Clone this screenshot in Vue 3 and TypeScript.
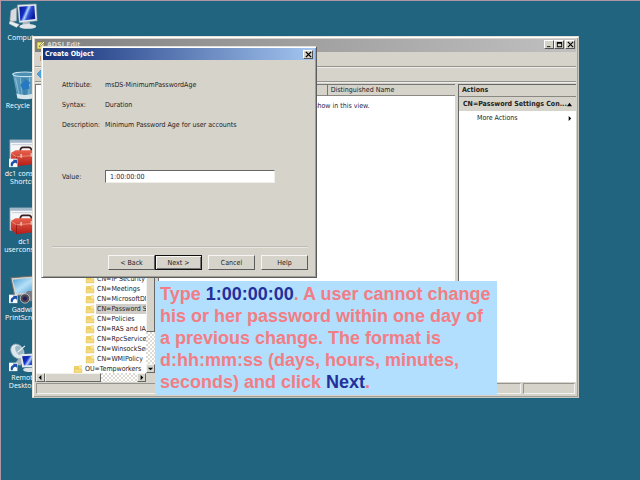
<script setup lang="ts">
import { ref } from 'vue'

interface TreeNode {
  label: string
  level: number
  selected?: boolean
}

interface Shortcut {
  icon: 'computer' | 'bin' | 'toolbox' | 'camera' | 'remote'
  lines: string[]
  link: boolean
}

const shortcuts: Shortcut[] = [
  { icon: 'computer', lines: ['Computer'], link: false },
  { icon: 'bin', lines: ['Recycle Bin'], link: false },
  { icon: 'toolbox', lines: ['dc1 console', 'Shortcut'], link: true },
  { icon: 'toolbox', lines: ['dc1', 'userconsole'], link: false },
  { icon: 'camera', lines: ['Gadwin', 'PrintScreen'], link: true },
  { icon: 'remote', lines: ['Remote', 'Desktops'], link: true },
]

const nodes: TreeNode[] = [
  { label: 'CN=IP Security', level: 2 },
  { label: 'CN=Meetings', level: 2 },
  { label: 'CN=MicrosoftDNS', level: 2 },
  { label: 'CN=Password Settings', level: 2, selected: true },
  { label: 'CN=Policies', level: 2 },
  { label: 'CN=RAS and IAS', level: 2 },
  { label: 'CN=RpcServices', level: 2 },
  { label: 'CN=WinsockServices', level: 2 },
  { label: 'CN=WMIPolicy', level: 2 },
  { label: 'OU=Tempworkers', level: 1 },
]

const duration = ref('1:00:00:00')
</script>

<template>
  <main class="desktop">
    <svg class="defs" width="0" height="0" aria-hidden="true">
      <defs>
        <linearGradient id="screen" x1="0" y1="0" x2="1" y2="0.4">
          <stop offset="0" stop-color="#0a1a8c" />
          <stop offset="0.4" stop-color="#1230c8" />
          <stop offset="0.55" stop-color="#b4d0fa" />
          <stop offset="0.7" stop-color="#2c50d8" />
          <stop offset="1" stop-color="#0c1c9c" />
        </linearGradient>
        <linearGradient id="glass" x1="0" y1="0" x2="1" y2="1">
          <stop offset="0" stop-color="#4ea2d8" />
          <stop offset="0.5" stop-color="#b6e0f6" />
          <stop offset="1" stop-color="#4a9ad2" />
        </linearGradient>
        <linearGradient id="bin" x1="0" y1="0" x2="1" y2="0">
          <stop offset="0" stop-color="#7fb6d4" />
          <stop offset="0.5" stop-color="#3c88b4" />
          <stop offset="1" stop-color="#a8cfe2" />
        </linearGradient>
        <linearGradient id="red" x1="0" y1="0" x2="0" y2="1">
          <stop offset="0" stop-color="#e8604c" />
          <stop offset="1" stop-color="#b41c18" />
        </linearGradient>
      </defs>
    </svg>

    <nav class="shortcuts" aria-label="Desktop">
      <a v-for="item in shortcuts" :key="item.lines.join(' ')" href="#" class="shortcut">
        <svg class="shortcut-icon" viewBox="0 0 32 32" aria-hidden="true">
          <g v-if="item.icon === 'computer'">
            <path d="M2 8 8 5v14l-5 1-2-2z" fill="#d8dce0" stroke="#9aa4ac" stroke-width="0.6" />
            <path d="M15 20h7l1 4h-9z" fill="#aeb8c0" />
            <ellipse cx="20" cy="25" rx="9" ry="2.6" fill="#dfe4e8" />
            <path d="M9 2 29 1l1 18-19 2z" fill="#e6eaee" stroke="#9aa8b4" stroke-width="0.6" />
            <path d="M11 4l16-1 1 14-16 2z" fill="url(#screen)" />
            <path d="M1 19l10 4-3 3-8-4z" fill="#eceff1" stroke="#98a4ac" stroke-width="0.5" />
          </g>
          <g v-else-if="item.icon === 'bin'">
            <path d="M4 3h26l-4 26H9z" fill="url(#bin)" opacity="0.85" />
            <ellipse cx="17" cy="3.500" rx="13" ry="2.5" fill="#4b8eb2" stroke="#c8e2ee" stroke-width="1.2" />
            <path d="M7 8l4 18M12 7l2 20M22 7l-1 20" stroke="#b8dcec" stroke-width="1" fill="none" opacity="0.5" />
            <path d="M15 12l4-3 4 4-2 1 1 5-7 1-3-5z" fill="#2678c0" />
            <path d="M8 24q8 3 19 0l-1 5q-8 2-17 0z" fill="#d8e6ec" />
          </g>
          <g v-else-if="item.icon === 'toolbox'">
            <path d="M1 1h30v24H1z" fill="#f4f6f8" stroke="#8ea0b0" stroke-width="0.8" />
            <path d="M1 1h30v3H1z" fill="#a4b8cc" />
            <path d="M3 6h26" stroke="#c6ced6" />
            <path d="M12 13q0-4 3-4h6q3 0 3 4" fill="none" stroke="#3a2020" stroke-width="1.8" />
            <path d="M2 15l5-3h25v14l-24 3-6-5z" fill="url(#red)" />
            <path d="M2 15l6 4 24-2" fill="none" stroke="#f09880" stroke-width="0.9" />
            <path d="M8 19v10" stroke="#8c1410" stroke-width="0.8" />
            <path d="M12 16h2v4h-2zM23 15h2v4h-2z" fill="#e8b4a4" />
          </g>
          <g v-else-if="item.icon === 'camera'">
            <path d="M2 3 27 1l3 19-24 2z" fill="#d8d4cc" stroke="#6e6a62" stroke-width="1" />
            <path d="M4 5l21-2 3 15-20 2z" fill="url(#glass)" />
            <path d="M16 21l4-4h12v11H15z" fill="#7c7c84" />
            <circle cx="17" cy="25" r="5" fill="#4c4854" stroke="#c0bcc4" stroke-width="1" />
            <circle cx="17" cy="25" r="2.2" fill="#281c5c" />
          </g>
          <g v-else>
            <path d="M11 15l5 4-4 5-6-1z" fill="#a8b4bc" />
            <ellipse cx="9" cy="9" rx="6.500" ry="8.500" transform="rotate(-35 9 9)" fill="#dce8ee" stroke="#8aa0ac" stroke-width="0.8" />
            <ellipse cx="11" cy="8" rx="3.500" ry="6" transform="rotate(-35 11 8)" fill="#9cb8c6" />
            <path d="M9 10l8-7" stroke="#eef4f6" stroke-width="1.2" />
            <path d="M12 12l20-1v14l-18 1z" fill="#e2e8ee" />
            <path d="M14 14l18-1v10l-16 1z" fill="url(#screen)" />
            <ellipse cx="23" cy="28.500" rx="8" ry="2.500" fill="#dce2e6" />
          </g>
          <g v-if="item.link">
            <path d="M0 21h9v9H0z" fill="#f6f8fc" />
            <path d="M2 29q-1-5 3-5.500L4 22h4.500v4.500L7 25.200Q4 25.500 4 29z" fill="#1c50a8" />
          </g>
        </svg>
        <span v-for="line in item.lines" :key="line">{{ line }}</span>
      </a>
    </nav>

    <section class="window console">
      <header class="titlebar inactive">
        <svg class="app-icon" viewBox="0 0 10 10" aria-hidden="true">
          <path d="M1 2h7v7H1z" fill="#f4e878" stroke="#8c7c20" stroke-width="0.7" />
          <path d="M3 7l1-2 4-4 1 1-4 4z" fill="#fff" stroke="#5c5420" stroke-width="0.6" />
        </svg>
        <h1>ADSI Edit</h1>
        <div class="captions">
          <button type="button" aria-label="Minimize">
            <svg viewBox="0 0 8 8"><path d="M1 6h4v1H1z" /></svg>
          </button>
          <button type="button" aria-label="Maximize">
            <svg viewBox="0 0 8 8"><path d="M1 1h6v6H1zM2 3v3h4V3z" fill-rule="evenodd" /></svg>
          </button>
          <button type="button" class="apart" aria-label="Close">
            <svg viewBox="0 0 8 8"><path d="M1 1l6 6M7 1L1 7" stroke="#000" stroke-width="1.3" /></svg>
          </button>
        </div>
      </header>
      <div class="menu"><button type="button">File</button><button type="button">Action</button></div>
      <div class="toolbar">
        <button type="button" aria-label="Back">
          <svg viewBox="0 0 12 10"><path d="M0 5l5-5v3h7v4H5v3z" fill="#48a4e0" stroke="#2470b0" stroke-width="0.5" /></svg>
        </button>
      </div>

      <div class="panes">
        <div class="tree-pane">
          <ul class="tree">
            <li v-for="node in nodes" :key="node.label" :class="['node', `level-${node.level}`]">
              <svg viewBox="0 0 10 9" aria-hidden="true">
                <path d="M1 1h7l1 1v6H1z" fill="#f0d068" />
                <path d="M6 0h3v4H6z" fill="#f8e8a0" />
                <path d="M1 4h8v4H1z" fill="#f6dc80" stroke="#dcb850" stroke-width="0.4" />
              </svg>
              <span :class="{ selected: node.selected }">{{ node.label }}</span>
            </li>
          </ul>
          <div class="vscroll">
            <div class="thumb"></div>
            <div class="track"></div>
            <button type="button" aria-label="Scroll down">
              <svg viewBox="0 0 8 8"><path d="M1 3h6L4 6z" /></svg>
            </button>
          </div>
          <div class="hscroll">
            <button type="button" aria-label="Scroll left">
              <svg viewBox="0 0 8 8"><path d="M5 1v6L2 4z" /></svg>
            </button>
            <div class="thumb"></div>
            <div class="track"></div>
            <button type="button" aria-label="Scroll right">
              <svg viewBox="0 0 8 8"><path d="M3 1v6l3-3z" /></svg>
            </button>
          </div>
        </div>

        <div class="list-pane">
          <table>
            <thead>
              <tr><th class="name-col">Name</th><th>Distinguished Name</th></tr>
            </thead>
            <tbody>
              <tr><td colspan="2">There are no items to show in this view.</td></tr>
            </tbody>
          </table>
        </div>

        <aside class="actions">
          <h2>Actions</h2>
          <button type="button" class="group">
            <span>CN=Password Settings Con...</span>
            <svg viewBox="0 0 6 6"><path d="M0 5h6L3 1z" /></svg>
          </button>
          <button type="button" class="more">
            <span>More Actions</span>
            <svg viewBox="0 0 6 6"><path d="M2 0v6l3-3z" /></svg>
          </button>
        </aside>
      </div>

      <footer class="status"><span class="wide"></span><span></span></footer>
    </section>

    <form class="window dialog" @submit.prevent>
      <header class="titlebar">
        <h1>Create Object</h1>
        <div class="captions">
          <button type="button" aria-label="Close">
            <svg viewBox="0 0 8 8"><path d="M1 1l6 6M7 1L1 7" stroke="#000" stroke-width="1.6" /></svg>
          </button>
        </div>
      </header>
      <div class="fields">
        <span>Attribute:</span><span>msDS-MinimumPasswordAge</span>
        <span>Syntax:</span><span>Duration</span>
        <span>Description:</span><span>Minimum Password Age for user accounts</span>
      </div>
      <div class="value-row">
        <label for="value">Value:</label>
        <input id="value" v-model="duration" type="text" />
      </div>
      <div class="buttons">
        <div class="pair">
          <button type="button">&lt; Back</button>
          <button type="submit" class="default">Next &gt;</button>
        </div>
        <button type="button">Cancel</button>
        <button type="button">Help</button>
      </div>
    </form>

    <p class="callout">
      Type <strong>1:00:00:00</strong>. A user cannot change<br />
      his or her password within one day of<br />
      a previous change. The format is<br />
      d:hh:mm:ss (days, hours, minutes,<br />
      seconds) and click <strong>Next</strong>.
    </p>
  </main>
</template>

<style>
body {
  margin: 0;
}
</style>

<style scoped>
* {
  box-sizing: border-box;
}

.desktop {
  position: relative;
  min-height: 100vh;
  overflow: hidden;
  background: #216480;
  border-top: 1px solid #b096a4;
  border-left: 1px solid #b096a4;
  font: 7px/10px "DejaVu Sans Condensed", "DejaVu Sans", sans-serif;
  color: #222;
}

.defs {
  position: absolute;
}

h1,
h2,
p,
ul {
  margin: 0;
  padding: 0;
}

button,
input {
  font: inherit;
  color: inherit;
  margin: 0;
  padding: 0;
  border: 0;
  border-radius: 0;
  background: none;
}

/* Desktop icons */
.shortcuts {
  display: grid;
  grid-auto-rows: 68px;
  width: 46px;
  padding-top: 2px;
}

.shortcut {
  display: flex;
  flex-direction: column;
  align-items: center;
  font: 7px/8px "Open Sans", sans-serif;
  color: #fff;
  text-decoration: none;
  white-space: nowrap;
}

.shortcut-icon {
  flex: none;
  width: 30px;
  height: 30px;
  margin-bottom: 1px;
}

/* Window frame */
.window {
  position: absolute;
  display: flex;
  flex-direction: column;
  background: #d6d3cb;
  border: 1px solid;
  border-color: #e4e2dc #5c5c5c #5c5c5c #e4e2dc;
  box-shadow: inset 1px 1px #fff, inset -1px -1px #a09e98;
}

.titlebar {
  display: flex;
  align-items: center;
  flex: none;
  height: 12px;
  padding: 0 2px;
  background: linear-gradient(90deg, #14307a, #a4c6f0);
  color: #fff;
}

.titlebar.inactive {
  align-items: flex-start;
  height: 13px;
  padding: 1px 1px 0;
  background: linear-gradient(90deg, #808080, #c0c0c0);
  color: #d6d3cb;
}

.titlebar h1 {
  flex: 1;
  font-size: 7px;
  line-height: 10px;
  font-weight: bold;
}

.app-icon {
  width: 10px;
  height: 10px;
  margin-right: 1px;
}

.captions {
  display: flex;
}

.captions button {
  display: grid;
  place-items: center;
  width: 10px;
  height: 9px;
  background: #d6d3cb;
  border: 1px solid;
  border-color: #fff #555 #555 #fff;
}

.captions .apart {
  margin-left: 1px;
}

.captions svg {
  width: 7px;
  height: 7px;
}

/* Console window */
.console {
  top: 35px;
  left: 31px;
  right: 61px;
  bottom: 82px;
  padding: 2px;
  border-color: #e4e2dc #c8c6c0 #c8c6c0 #e4e2dc;
}

.menu,
.toolbar {
  display: flex;
  flex: none;
  align-items: center;
  height: 15px;
  padding-left: 5px;
  gap: 8px;
  border-bottom: 1px solid #96948e;
  box-shadow: 0 1px #eeece8;
}

.toolbar {
  padding-left: 2px;
}

.toolbar svg {
  display: block;
  width: 12px;
  height: 10px;
}

.panes {
  display: flex;
  flex: 1;
  min-height: 0;
  gap: 3px;
  padding-top: 2px;
}

.tree-pane {
  display: grid;
  grid-template: minmax(0, 1fr) 9px / minmax(0, 1fr) 9px;
  flex: none;
  width: 120px;
  border-top: 1px solid #777;
  border-left: 1px solid #777;
}

.tree {
  overflow: hidden;
  padding-top: 189px;
  background: #fff;
  list-style: none;
}

.node {
  display: flex;
  align-items: center;
  gap: 1px;
  height: 10px;
  padding-left: 49px;
  white-space: nowrap;
}

.level-1 {
  padding-left: 37px;
}

.node svg {
  flex: none;
  width: 10px;
  height: 9px;
}

.node span {
  padding: 0 1px;
}

.node .selected {
  background: #d0cdc8;
}

.vscroll,
.hscroll {
  display: flex;
}

.vscroll {
  flex-direction: column;
}

.hscroll .thumb {
  flex: 3;
}

.hscroll .track {
  flex: 2;
}

.vscroll .thumb {
  flex: 1;
}

.vscroll .track {
  flex: none;
  height: 32px;
}

.vscroll button,
.hscroll button,
.thumb {
  background: #d6d3cb;
  border: 1px solid;
  border-color: #f4f2ee #666 #666 #f4f2ee;
}

.vscroll button,
.hscroll button {
  flex: none;
  width: 9px;
  height: 9px;
}

.vscroll svg,
.hscroll svg {
  display: block;
  width: 7px;
  height: 7px;
}

.track {
  background: repeating-conic-gradient(#fff 0 25%, #dedbd5 0 50%) 0 0 / 4px 4px;
}

.list-pane {
  flex: 1;
  min-width: 0;
  background: #fff;
  border-top: 1px solid #777;
  border-left: 1px solid #777;
}

table {
  width: 100%;
  border-collapse: separate;
  border-spacing: 0;
}

th {
  height: 11px;
  padding: 0 3px;
  background: #d6d3cb;
  border-bottom: 1px solid #8a8882;
  font-weight: normal;
  text-align: left;
}

.name-col {
  width: 57%;
  border-right: 1px solid #777;
}

td {
  padding: 5px 0;
  text-align: center;
  color: #2a2248;
}

.actions {
  flex: none;
  width: 118px;
  background: #fff;
  border-top: 1px solid #666;
  border-left: 1px solid #666;
}

.actions h2 {
  padding-left: 3px;
  background: #d6d3cb;
  border-bottom: 1px solid #8a8882;
  font-size: 7px;
  line-height: 11px;
}

.group,
.more {
  display: flex;
  align-items: center;
  justify-content: space-between;
  width: 100%;
  height: 14px;
  padding: 0 4px;
}

.group {
  background: #d6d3cb;
  font-weight: bold;
}

.more {
  padding-left: 18px;
}

.group svg,
.more svg {
  width: 5px;
  height: 5px;
}

.status {
  display: flex;
  flex: none;
  gap: 2px;
  height: 13px;
  padding: 1px;
}

.status span {
  width: 52px;
  border: 1px solid;
  border-color: #96948e #f4f2ee #f4f2ee #96948e;
}

.status .wide {
  flex: 1;
}

/* Dialog */
.dialog {
  top: 45px;
  left: 40px;
  width: 276px;
  padding: 1px 1px 7px;
}

.fields {
  display: grid;
  grid-template-columns: 43px 1fr;
  row-gap: 10px;
  padding: 20px 19px 0;
}

.value-row {
  display: flex;
  align-items: center;
  margin-top: 40px;
  padding-left: 19px;
}

.value-row label {
  width: 43px;
}

.value-row input {
  width: 170px;
  height: 13px;
  padding: 0 4px;
  background: #fff;
  border: 1px solid;
  border-color: #666 #f0eee8 #f0eee8 #666;
  color: #2c1c60;
}

.buttons {
  display: flex;
  justify-content: flex-end;
  gap: 6px;
  margin: 63px 7px 0 9px;
  padding-top: 8px;
  border-top: 1px solid #bebbb4;
  box-shadow: inset 0 1px #e8e6e0;
}

.pair {
  display: flex;
}

.buttons button {
  width: 47px;
  height: 15px;
  background: #d6d3cb;
  border: 1px solid;
  border-color: #f8f6f2 #5c5c5c #5c5c5c #f8f6f2;
}

.buttons .default {
  border-color: #111;
  box-shadow: inset 1px 1px #f8f6f2, inset -1px -1px #777;
}

/* Instruction balloon */
.callout {
  position: absolute;
  top: 280px;
  left: 154px;
  padding: 2px 5px;
  width: 342px;
  background: #b2dffe;
  color: #f27d84;
  font: bold 18px/22px "Liberation Sans", Arial, sans-serif;
  white-space: nowrap;
}

.callout strong {
  color: #24309a;
}
</style>
